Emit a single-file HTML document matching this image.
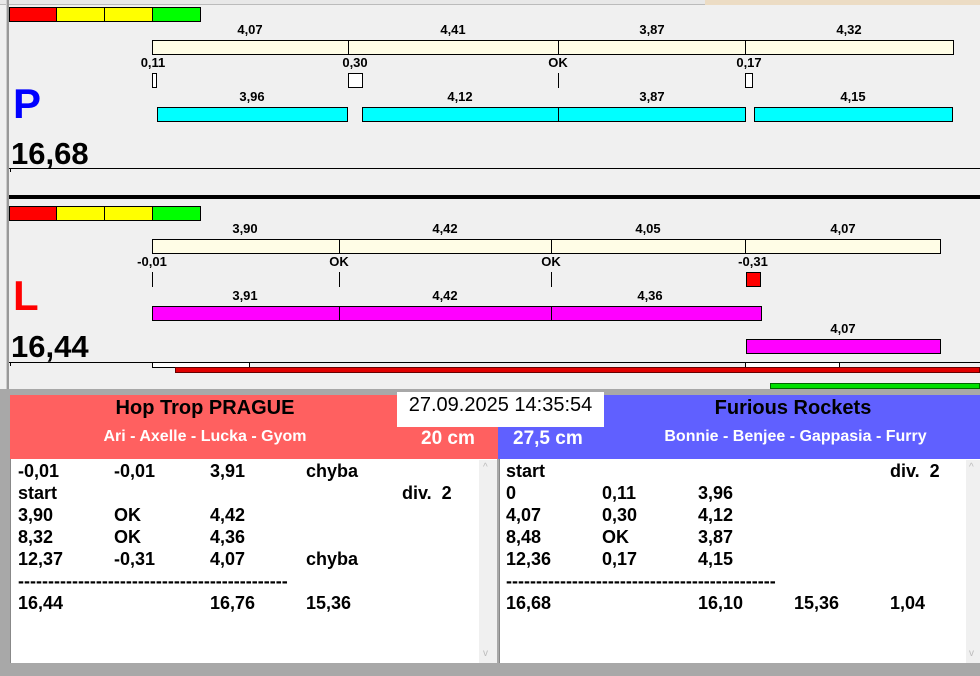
<!DOCTYPE html>
<html><head><meta charset="utf-8"><style>
*{margin:0;padding:0;box-sizing:border-box}
body{width:980px;height:676px;background:#f0f0f0;position:relative;overflow:hidden;font-family:"Liberation Sans",Arial,sans-serif;font-weight:bold;color:#000}
div{position:absolute}
.l{font-size:13px;width:80px;text-align:center;line-height:14px}
.b{border:1px solid #000}
.r{font-size:18px;line-height:22px;white-space:pre}
</style></head><body>
<div style="left:0;top:0;width:980px;height:5px;background:#e8e8e8;border-bottom:1px solid #bbb"></div>
<div style="left:705px;top:0;width:275px;height:5px;background:#ecdcc4"></div>
<div style="left:6px;top:0;width:3px;height:390px;background:#999;border-left:1px solid #ccc"></div>

<div class="b" style="left:9px;top:7px;width:48px;height:15px;background:#f00"></div>
<div class="b" style="left:56px;top:7px;width:49px;height:15px;background:#ff0"></div>
<div class="b" style="left:104px;top:7px;width:49px;height:15px;background:#ff0"></div>
<div class="b" style="left:152px;top:7px;width:49px;height:15px;background:#0f0"></div>

<div class="l" style="left:210px;top:23px">4,07</div>
<div class="l" style="left:413px;top:23px">4,41</div>
<div class="l" style="left:612px;top:23px">3,87</div>
<div class="l" style="left:809px;top:23px">4,32</div>
<div class="b" style="left:152px;top:40px;width:802px;height:15px;background:#fffde6"></div>
<div style="left:348px;top:40px;width:1px;height:15px;background:#000"></div>
<div style="left:558px;top:40px;width:1px;height:15px;background:#000"></div>
<div style="left:745px;top:40px;width:1px;height:15px;background:#000"></div>
<div class="l" style="left:113px;top:56px">0,11</div>
<div class="l" style="left:315px;top:56px">0,30</div>
<div class="l" style="left:518px;top:56px">OK</div>
<div class="l" style="left:709px;top:56px">0,17</div>
<div class="b" style="left:152px;top:73px;width:5px;height:15px;background:#fff"></div>
<div class="b" style="left:348px;top:73px;width:15px;height:15px;background:#fff"></div>
<div style="left:558px;top:73px;width:1px;height:15px;background:#000"></div>
<div class="b" style="left:745px;top:73px;width:8px;height:15px;background:#fff"></div>
<div class="l" style="left:212px;top:90px">3,96</div>
<div class="l" style="left:420px;top:90px">4,12</div>
<div class="l" style="left:612px;top:90px">3,87</div>
<div class="l" style="left:813px;top:90px">4,15</div>
<div class="b" style="left:157px;top:107px;width:191px;height:15px;background:#0ff"></div>
<div class="b" style="left:362px;top:107px;width:197px;height:15px;background:#0ff"></div>
<div class="b" style="left:558px;top:107px;width:188px;height:15px;background:#0ff"></div>
<div class="b" style="left:754px;top:107px;width:199px;height:15px;background:#0ff"></div>
<div style="left:13px;top:80px;font-size:42px;color:#00f;line-height:48px">P</div>
<div style="left:11px;top:137px;font-size:31px;line-height:34px">16,68</div>
<div style="left:9px;top:168px;width:971px;height:1px;background:#000"></div>
<div style="left:10px;top:168px;width:1px;height:4px;background:#000"></div>
<div style="left:9px;top:195px;width:971px;height:4px;background:#000"></div>

<div class="b" style="left:9px;top:206px;width:48px;height:15px;background:#f00"></div>
<div class="b" style="left:56px;top:206px;width:49px;height:15px;background:#ff0"></div>
<div class="b" style="left:104px;top:206px;width:49px;height:15px;background:#ff0"></div>
<div class="b" style="left:152px;top:206px;width:49px;height:15px;background:#0f0"></div>
<div class="l" style="left:205px;top:222px">3,90</div>
<div class="l" style="left:405px;top:222px">4,42</div>
<div class="l" style="left:608px;top:222px">4,05</div>
<div class="l" style="left:803px;top:222px">4,07</div>
<div class="b" style="left:152px;top:239px;width:789px;height:15px;background:#fffde6"></div>
<div style="left:339px;top:239px;width:1px;height:15px;background:#000"></div>
<div style="left:551px;top:239px;width:1px;height:15px;background:#000"></div>
<div style="left:745px;top:239px;width:1px;height:15px;background:#000"></div>
<div class="l" style="left:112px;top:255px">-0,01</div>
<div class="l" style="left:299px;top:255px">OK</div>
<div class="l" style="left:511px;top:255px">OK</div>
<div class="l" style="left:713px;top:255px">-0,31</div>
<div style="left:152px;top:272px;width:1px;height:15px;background:#000"></div>
<div style="left:339px;top:272px;width:1px;height:15px;background:#000"></div>
<div style="left:551px;top:272px;width:1px;height:15px;background:#000"></div>
<div class="b" style="left:746px;top:272px;width:15px;height:15px;background:#f00"></div>
<div class="l" style="left:205px;top:289px">3,91</div>
<div class="l" style="left:405px;top:289px">4,42</div>
<div class="l" style="left:610px;top:289px">4,36</div>
<div class="b" style="left:152px;top:306px;width:610px;height:15px;background:#f0f"></div>
<div style="left:339px;top:306px;width:1px;height:15px;background:#000"></div>
<div style="left:551px;top:306px;width:1px;height:15px;background:#000"></div>
<div class="l" style="left:803px;top:322px">4,07</div>
<div class="b" style="left:746px;top:339px;width:195px;height:15px;background:#f0f"></div>
<div style="left:13px;top:272px;font-size:42px;color:#f00;line-height:48px">L</div>
<div style="left:11px;top:330px;font-size:31px;line-height:34px">16,44</div>
<div style="left:9px;top:362px;width:971px;height:1px;background:#000"></div>
<div style="left:10px;top:362px;width:1px;height:4px;background:#000"></div>
<div class="b" style="left:152px;top:362px;width:98px;height:6px;background:#fff"></div>
<div class="b" style="left:745px;top:362px;width:95px;height:6px;background:#fff"></div>
<div style="left:175px;top:367px;width:805px;height:6px;background:#e00000;border:1px solid #600"></div>
<div style="left:770px;top:383px;width:210px;height:6px;background:#00e000;border:1px solid #060"></div>

<div style="left:0;top:389px;width:980px;height:287px;background:#a8a8a8"></div>
<div style="left:10px;top:395px;width:488px;height:64px;background:#ff6060"></div>
<div style="left:498px;top:395px;width:482px;height:64px;background:#6060ff"></div>
<div style="left:397px;top:392px;width:207px;height:35px;background:#fff"></div>
<div style="left:397px;top:392px;width:207px;height:30px;font-size:20px;font-weight:normal;line-height:26px;text-align:center">27.09.2025 14:35:54</div>
<div style="left:10px;top:397px;width:390px;text-align:center;font-size:20px;line-height:22px">Hop Trop PRAGUE</div>
<div style="left:10px;top:427px;width:390px;text-align:center;font-size:16px;line-height:20px;color:#fff">Ari - Axelle - Lucka - Gyom</div>
<div style="left:421px;top:428px;font-size:19px;line-height:22px;color:#fff">20 cm</div>
<div style="left:603px;top:397px;width:380px;text-align:center;font-size:20px;line-height:22px">Furious Rockets</div>
<div style="left:603px;top:427px;width:385px;text-align:center;font-size:16px;line-height:20px;color:#fff">Bonnie - Benjee - Gappasia - Furry</div>
<div style="left:513px;top:428px;font-size:19px;line-height:22px;color:#fff">27,5 cm</div>

<div style="left:10px;top:459px;width:487px;height:204px;background:#fff;border-left:1px solid #888"></div>
<div style="left:479px;top:460px;width:18px;height:203px;background:#f0f0f0;color:#bbb;font-size:10px;text-align:center;font-weight:normal">
<div style="left:4px;top:2px">^</div><div style="left:4px;top:188px">v</div></div>
<div style="left:499px;top:459px;width:481px;height:204px;background:#fff;border-left:1px solid #888"></div>
<div style="left:966px;top:460px;width:14px;height:203px;background:#f0f0f0;color:#bbb;font-size:10px;font-weight:normal">
<div style="left:3px;top:2px">^</div><div style="left:3px;top:188px">v</div></div>

<div class="r" style="left:18px;top:460px">-0,01</div><div class="r" style="left:114px;top:460px">-0,01</div><div class="r" style="left:210px;top:460px">3,91</div><div class="r" style="left:306px;top:460px">chyba</div>
<div class="r" style="left:18px;top:482px">start</div><div class="r" style="left:402px;top:482px">div.  2</div>
<div class="r" style="left:18px;top:504px">3,90</div><div class="r" style="left:114px;top:504px">OK</div><div class="r" style="left:210px;top:504px">4,42</div>
<div class="r" style="left:18px;top:526px">8,32</div><div class="r" style="left:114px;top:526px">OK</div><div class="r" style="left:210px;top:526px">4,36</div>
<div class="r" style="left:18px;top:548px">12,37</div><div class="r" style="left:114px;top:548px">-0,31</div><div class="r" style="left:210px;top:548px">4,07</div><div class="r" style="left:306px;top:548px">chyba</div>
<div class="r" style="left:18px;top:570px">---------------------------------------------</div>
<div class="r" style="left:18px;top:592px">16,44</div><div class="r" style="left:210px;top:592px">16,76</div><div class="r" style="left:306px;top:592px">15,36</div>

<div class="r" style="left:506px;top:460px">start</div><div class="r" style="left:890px;top:460px">div.  2</div>
<div class="r" style="left:506px;top:482px">0</div><div class="r" style="left:602px;top:482px">0,11</div><div class="r" style="left:698px;top:482px">3,96</div>
<div class="r" style="left:506px;top:504px">4,07</div><div class="r" style="left:602px;top:504px">0,30</div><div class="r" style="left:698px;top:504px">4,12</div>
<div class="r" style="left:506px;top:526px">8,48</div><div class="r" style="left:602px;top:526px">OK</div><div class="r" style="left:698px;top:526px">3,87</div>
<div class="r" style="left:506px;top:548px">12,36</div><div class="r" style="left:602px;top:548px">0,17</div><div class="r" style="left:698px;top:548px">4,15</div>
<div class="r" style="left:506px;top:570px">---------------------------------------------</div>
<div class="r" style="left:506px;top:592px">16,68</div><div class="r" style="left:698px;top:592px">16,10</div><div class="r" style="left:794px;top:592px">15,36</div><div class="r" style="left:890px;top:592px">1,04</div>
</body></html>
